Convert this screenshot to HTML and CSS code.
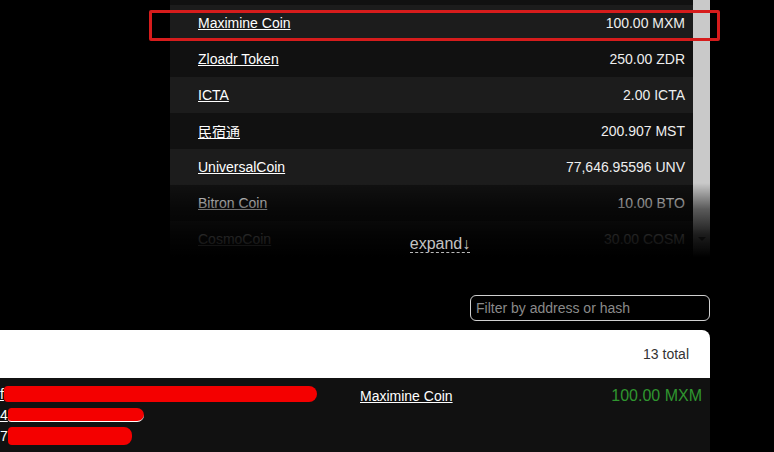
FILE: index.html
```html
<!DOCTYPE html>
<html>
  <head>
    <meta charset="utf-8" />
    <title>Token transfers</title>
    <link rel="stylesheet" href="styles.css">
  </head>
  <body>
    <div id="page">
      <div id="tokens">
        <div id="tokenScroll">
          <ul id="tokenList">
            <li><a href="#">Maximine Coin</a><span class="amount">100.00 MXM</span></li>
            <li><a href="#">Zloadr Token</a><span class="amount">250.00 ZDR</span></li>
            <li><a href="#">ICTA</a><span class="amount">2.00 ICTA</span></li>
            <li><a href="#">民宿通</a><span class="amount">200.907 MST</span></li>
            <li><a href="#">UniversalCoin</a><span class="amount">77,646.95596 UNV</span></li>
            <li><a href="#">Bitron Coin</a><span class="amount">10.00 BTO</span></li>
            <li><a href="#">CosmoCoin</a><span class="amount">30.00 COSM</span></li>
          </ul>
          <div id="scrollbar"><span class="arrowDown"></span></div>
        </div>
        <div id="fade"></div>
        <div id="expand"><a href="#">expand↓</a></div>
      </div>

      <div id="filterRow">
        <input type="text" placeholder="Filter by address or hash" />
      </div>

      <div id="transfers">
        <div id="transfersHead">13 total</div>
        <div class="transferRow">
          <div class="addrCell">
            <a href="#" class="addr">f<span class="redact r1"></span></a>
            <a href="#" class="addr">4<span class="redact r2"></span></a>
            <span class="addr">7<span class="redact r3"></span></span>
          </div>
          <div class="tokenCell"><a href="#">Maximine Coin</a></div>
          <div class="green">100.00 MXM</div>
        </div>
      </div>
    </div>

    <!-- marker drawn over the screenshot -->
    <div id="highlight"></div>
  </body>
</html>
```

FILE: styles.css
```css
* {
  box-sizing: border-box;
}
body {
  margin: 0;
  background: #000;
  color: #fff;
  font-family: "Liberation Sans", Arial, "Noto Sans CJK SC", sans-serif;
  overflow: hidden;
}
a {
  color: #fff;
}

#page {
  width: 710px;
}

#tokens {
  position: relative;
  margin-left: 170px;
  height: 257px;
  overflow: hidden;
}
#tokenScroll {
  display: flex;
  height: 100%;
}
#tokenList {
  flex: 1;
  margin: 0;
  padding: 5px 0 0;
  list-style: none;
  background: #111;
}
#tokenList li {
  display: flex;
  align-items: center;
  justify-content: space-between;
  height: 36px;
  padding: 0 8px 0 28px;
  background: #111;
  font-size: 14px;
}
#tokenList li:nth-child(odd) {
  background: #1c1c1c;
}
.amount {
  color: #eee;
}

#scrollbar {
  width: 17px;
  background: #c9c9c9;
  display: flex;
  flex-direction: column;
  justify-content: flex-end;
  padding-bottom: 10px;
}
.arrowDown {
  height: 17px;
  background: #bdbdbd;
  display: flex;
  align-items: center;
  justify-content: center;
}
.arrowDown::before {
  content: "";
  border-left: 4px solid transparent;
  border-right: 4px solid transparent;
  border-top: 4px solid #555;
}

#fade {
  position: absolute;
  left: 0;
  right: 0;
  bottom: 0;
  height: 74px;
  background: linear-gradient(rgba(0, 0, 0, 0), rgba(0, 0, 0, 0.55) 35%, rgba(0, 0, 0, 0.85) 70%, #000);
}
#expand {
  position: absolute;
  left: 0;
  right: 0;
  bottom: 4px;
  text-align: center;
  font-size: 16px;
  line-height: 18px;
}
#expand a {
  color: #c4c4c4;
  text-decoration: none;
  border-bottom: 1px dashed #bbb;
}

#filterRow {
  display: flex;
  justify-content: flex-end;
  margin-top: 38px;
}
#filterRow input {
  width: 240px;
  height: 26px;
  padding: 0 5px;
  border: 1px solid #d0d0d0;
  border-radius: 6px;
  background: #000;
  color: #fff;
  font: 14px "Liberation Sans", Arial, sans-serif;
  outline: none;
}
#filterRow input::placeholder {
  color: #8a8a8a;
}

#transfers {
  margin-top: 9px;
  background: #fff;
  border-radius: 0 8px 0 0;
}
#transfersHead {
  height: 48px;
  display: flex;
  align-items: center;
  justify-content: flex-end;
  padding-right: 21px;
  color: #333;
  font-size: 14px;
}
.transferRow {
  display: grid;
  grid-template-columns: 360px 1fr auto;
  align-items: start;
  min-height: 80px;
  padding: 6px 8px 10px 0;
  background: #111;
  font-size: 14px;
  line-height: 20px;
}
.addrCell {
  display: flex;
  flex-direction: column;
  align-items: flex-start;
  gap: 1px;
}
.addr {
  display: inline-flex;
  align-items: center;
  height: 20px;
  white-space: nowrap;
}
.redact {
  display: inline-block;
  background: #f40000;
  border-radius: 4px 8px 8px 4px;
}
.r1 {
  width: 313px;
  height: 16px;
}
.r2 {
  width: 136px;
  height: 14px;
  border-bottom: 1px solid #fff;
}
.r3 {
  width: 124px;
  height: 18px;
}
.tokenCell {
  padding-top: 2px;
}
.green {
  color: #2f962f;
  font-size: 16px;
  line-height: 24px;
}

#highlight {
  position: absolute;
  left: 149px;
  top: 10px;
  width: 571px;
  height: 31px;
  border: 3px solid #d61c1c;
  border-radius: 2px;
}
```
